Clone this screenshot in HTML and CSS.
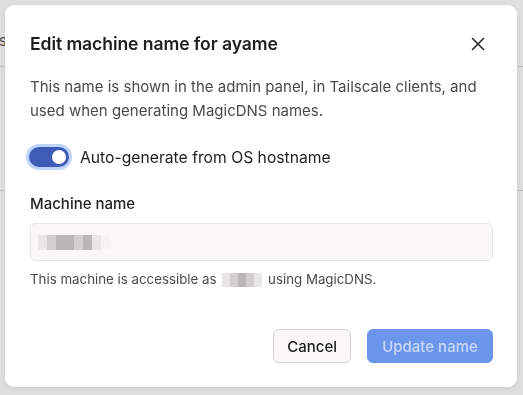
FILE: index.html
```html
<!DOCTYPE html>
<html lang="en">
  <head>
    <meta charset="UTF-8" />
    <meta name="viewport" content="width=device-width, initial-scale=1.0" />
    <title>Edit machine name</title>
    <link rel="stylesheet" href="styles.css">
  </head>
  <body>
    <div class="page">
      <div class="page-header"><span class="page-crumb">Machines</span></div>
      <div class="page-row"></div>
    </div>

    <div class="overlay">
      <div class="dialog" role="dialog" aria-labelledby="dialog-title">
        <div class="dialog-head">
          <h2 id="dialog-title">Edit machine name for ayame</h2>
          <button class="close" aria-label="Close">
            <svg width="14" height="14" viewBox="0 0 14 14" fill="none">
              <path d="M1.5 1.5l11 11M12.5 1.5l-11 11" stroke="#2a2a2a" stroke-width="1.6" stroke-linecap="round"/>
            </svg>
          </button>
        </div>

        <p class="desc">This name is shown in the admin panel, in Tailscale clients, and used when generating MagicDNS names.</p>

        <label class="toggle-row">
          <span class="toggle"><span class="knob"></span></span>
          <span>Auto-generate from OS hostname</span>
        </label>

        <div class="field-label">Machine name</div>
        <div class="input">
          <span class="blur"><i class="faint"></i><i></i><i class="dark"></i><i class="dark"></i><i></i><i class="dark"></i><i class="faint"></i><i class="ghost"></i></span>
        </div>
        <p class="hint">This machine is accessible as <span class="blur small"><i class="faint"></i><i></i><i class="dark"></i><i></i><i class="faint"></i></span> using MagicDNS.</p>

        <div class="actions">
          <button class="btn btn-cancel">Cancel</button>
          <button class="btn btn-primary" disabled>Update name</button>
        </div>
      </div>
    </div>
  </body>
</html>
```

FILE: styles.css
```css
*,
*::before,
*::after {
  box-sizing: border-box;
}
:root {
  --text: #1f1e1e;
  --muted: #4b4a4a;
  --blue: #3e5bb8;
  --field: #f9f8f7;
  --border: #e8e6e5;
}
body {
  margin: 0;
  height: 100vh;
  font-family: Inter, "Noto Sans", sans-serif;
  background: #ffffff;
  overflow: hidden;
}

/* the page that lies under the overlay */
.page-header {
  height: 67px;
  border-bottom: 1px solid #cfcfcf;
  padding: 30px 0 0 0;
}
.page-crumb {
  display: inline-block;
  margin-left: -62px;
  font-size: 15px;
  color: #444;
}
.page-row {
  height: 124px;
  border-bottom: 1px solid #cfcfcf;
}

.overlay {
  position: fixed;
  inset: 0;
  background: rgba(120, 120, 120, 0.24);
  padding: 5px 6px 8px 5px;
}

.dialog {
  height: 382px;
  background: #fff;
  border-radius: 9px;
  box-shadow: 0 2px 6px rgba(0, 0, 0, 0.08);
  padding: 25px 24px 0 25px;
  color: var(--text);
}

.dialog-head {
  display: flex;
  align-items: center;
  justify-content: space-between;
  height: 27px;
}
.dialog-head h2 {
  margin: 0;
  font-size: 17.6px;
  font-weight: 600;
  letter-spacing: -0.1px;
}
.close {
  border: 0;
  background: none;
  padding: 0;
  margin-right: 8px;
  width: 14px;
  height: 14px;
  display: flex;
}

.desc {
  margin: 18px 0 0;
  font-size: 15px;
  line-height: 24px;
  color: var(--muted);
}

.toggle-row {
  display: flex;
  align-items: center;
  gap: 11px;
  margin-top: 24px;
  font-size: 15.7px;
  color: var(--text);
}
.toggle {
  width: 40px;
  height: 20px;
  margin-left: -1px;
  border-radius: 10px;
  background: var(--blue);
  box-shadow: 0 0 0 3px #bfd4fb;
  display: flex;
  align-items: center;
  justify-content: flex-end;
  padding-right: 3px;
}
.knob {
  width: 14px;
  height: 14px;
  border-radius: 50%;
  background: #fff;
}

.field-label {
  margin-top: 27px;
  font-size: 15px;
  font-weight: 500;
  line-height: 20px;
}
.input {
  margin-top: 9px;
  height: 38px;
  background: var(--field);
  border: 1px solid var(--border);
  border-radius: 5px;
  display: flex;
  align-items: center;
  padding-left: 7px;
}

.blur {
  display: inline-flex;
  vertical-align: middle;
}
.blur i {
  width: 9px;
  height: 15px;
  background: #d2d0cf;
}
.blur i.dark {
  background: #b9b7b6;
}
.blur i.faint {
  background: #e8e7e6;
}
.blur i.ghost {
  background: #f5f4f3;
}
.blur.small {
  margin: 0 2px;
}
.blur.small i {
  width: 8px;
  height: 14px;
}

.hint {
  margin: 9px 0 0;
  font-size: 13.3px;
  line-height: 18px;
  color: var(--muted);
}

.actions {
  display: flex;
  justify-content: flex-end;
  gap: 16px;
  margin-top: 41px;
}
.btn {
  height: 34px;
  border-radius: 6px;
  font-family: inherit;
  font-size: 15px;
  font-weight: 500;
  padding: 0 13px;
}
.btn-cancel {
  background: var(--field);
  border: 1px solid #d8d5d4;
  color: var(--text);
}
.btn-primary {
  background: #6b96ec;
  border: 1px solid #6b96ec;
  color: #c9d9f8;
  width: 126px;
}
```
